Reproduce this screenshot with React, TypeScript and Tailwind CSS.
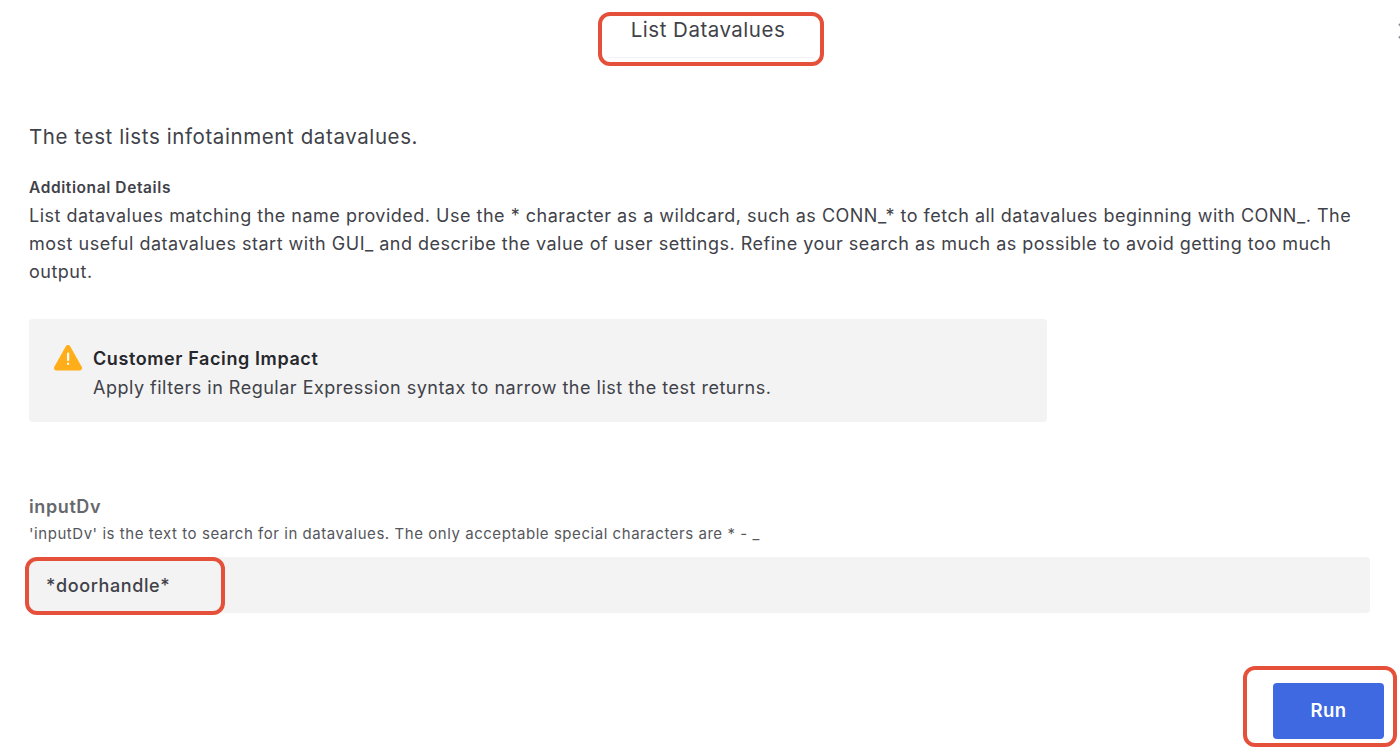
import React from "react";

function WarningIcon() {
  return (
    <svg width="30" height="26" viewBox="0 0 30 26" className="shrink-0">
      <path
        d="M15 2.5 L26.5 23 H3.5 Z"
        fill="#ffae1a"
        stroke="#ffae1a"
        strokeWidth="5"
        strokeLinejoin="round"
      />
      <rect x="14" y="7.5" width="2.2" height="8.5" rx="1" fill="#fff" />
      <rect x="14" y="17.5" width="2.2" height="2.5" rx="1" fill="#fff" />
    </svg>
  );
}

export default function App() {
  return (
    <div className="relative h-[747px] w-[1400px] overflow-hidden bg-white font-['Inter',sans-serif] text-[#3f4249]">
      <header className="flex h-[58px] justify-center pt-[17px] pl-[16px]">
        <h1 className="text-[20.5px] leading-[26px] tracking-[0.5px]">List Datavalues</h1>
      </header>

      <main className="px-[29px]">
        <p className="mt-[66px] text-[20.5px] leading-[26px] tracking-[0.6px]">The test lists infotainment datavalues.</p>

        <h2 className="mt-[28px] text-[15.5px] leading-[20px] font-semibold tracking-[0.6px]">Additional Details</h2>
        <p className="mt-[4px] w-[1330px] text-[18px] leading-[28px] tracking-[0.5px]">
          List datavalues matching the name provided. Use the * character as a wildcard, such as CONN_* to fetch all
          datavalues beginning with CONN_. The most useful datavalues start with GUI_ and describe the value of user
          settings. Refine your search as much as possible to avoid getting too much output.
        </p>

        <section className="mt-[33px] flex h-[103px] w-[1018px] gap-[10px] rounded-[4px] bg-[#f3f3f3] pt-[26px] pl-[24px]">
          <WarningIcon />
          <div>
            <h3 className="text-[18px] leading-[28px] font-semibold tracking-[0.6px] text-[#25272c]">
              Customer Facing Impact
            </h3>
            <p className="text-[18px] leading-[30px] tracking-[0.5px]">
              Apply filters in Regular Expression syntax to narrow the list the test returns.
            </p>
          </div>
        </section>

        <label className="mt-[72px] block text-[18px] leading-[26px] font-semibold tracking-[0.6px] text-[#66686d]">
          inputDv
        </label>
        <p className="mt-[3px] text-[15px] leading-[22px] tracking-[0.55px] text-[#55575c]">
          'inputDv' is the text to search for in datavalues. The only acceptable special characters are * - _
        </p>
        <input
          readOnly
          value="*doorhandle*"
          className="mt-[12px] block h-[56px] w-[1341px] rounded-[4px] bg-[#f3f3f3] px-[17px] text-[18px] font-medium tracking-[0.6px] text-[#3f4249] outline-none"
        />

        <div className="mt-[70px] flex w-[1355px] justify-end">
          <button className="h-[56px] w-[111px] rounded-[4px] bg-[#3e69e0] text-[18.5px] font-semibold tracking-[0.5px] text-white">
            Run
          </button>
        </div>
      </main>

      {/* close icon, mostly cut off by the right edge */}
      <svg width="16" height="18" viewBox="0 0 16 18" className="absolute top-[22px] left-[1398px]">
        <path d="M1 2 L15 16 M15 2 L1 16" stroke="#8a8c90" strokeWidth="2" fill="none" />
      </svg>

      {/* red annotation boxes drawn over the page */}
      <div className="pointer-events-none absolute top-[12px] left-[598px] h-[54px] w-[226px] rounded-[12px] border-[4px] border-[#e5503a]">
        <div className="absolute top-[41px] right-[6px] left-[6px] h-px bg-[#f1f2f4]" />
      </div>
      <div className="pointer-events-none absolute top-[557px] left-[25px] h-[58px] w-[200px] rounded-[12px] border-[4px] border-[#e5503a]" />
      <div className="pointer-events-none absolute top-[666px] left-[1243px] h-[81px] w-[154px] rounded-[12px] border-[4px] border-[#e5503a]" />
    </div>
  );
}
